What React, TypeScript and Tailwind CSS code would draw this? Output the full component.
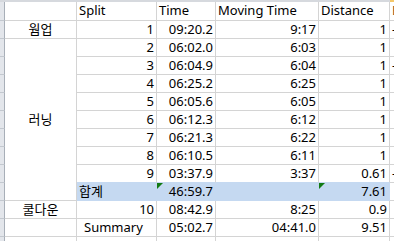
import React from "react";

type Row = { split: string; time: string; moving: string; dist: string; dash?: boolean };

const rows: Row[] = [
  { split: "1", time: "09:20.2", moving: "9:17", dist: "1", dash: true },
  { split: "2", time: "06:02.0", moving: "6:03", dist: "1" },
  { split: "3", time: "06:04.9", moving: "6:04", dist: "1", dash: true },
  { split: "4", time: "06:25.2", moving: "6:25", dist: "1" },
  { split: "5", time: "06:05.6", moving: "6:05", dist: "1" },
  { split: "6", time: "06:12.3", moving: "6:12", dist: "1" },
  { split: "7", time: "06:21.3", moving: "6:22", dist: "1" },
  { split: "8", time: "06:10.5", moving: "6:11", dist: "1" },
  { split: "9", time: "03:37.9", moving: "3:37", dist: "0.61", dash: true },
];

const line = "shrink-0 border-r border-b border-[#d4d4d4] whitespace-nowrap overflow-hidden";
const num = "text-right pr-[2px]";
const hl = "shrink-0 bg-[#c5d9f1] border-r border-b border-[#c5d9f1] whitespace-nowrap overflow-hidden relative";
const tail = "flex-1 min-w-0 border-b border-[#d4d4d4] pl-[2px] whitespace-nowrap overflow-hidden";

// green error marker in the top-left corner of a cell
function Tri() {
  return (
    <svg className="absolute left-0 top-0" width="6" height="6" viewBox="0 0 6 6">
      <polygon points="0,0 6,0 0,6" fill="#137a13" />
    </svg>
  );
}

function DataRow({ r, last }: { r: Row; last?: boolean }) {
  const b = last ? " border-b-[#c5d9f1]" : "";
  return (
    <div className="flex h-[18px]">
      <div className={"w-[80px] " + line + " " + num + b}>{r.split}</div>
      <div className={"w-[59px] " + line + " " + num + b}>{r.time}</div>
      <div className={"w-[103px] " + line + " " + num + b}>{r.moving}</div>
      <div className={"w-[71px] " + line + " " + num + b}>{r.dist}</div>
      <div className={tail}>{r.dash ? "-" : ""}</div>
    </div>
  );
}

export default function App() {
  return (
    <div
      className="w-[394px] h-[241px] overflow-hidden bg-white text-black text-[13px] leading-[17px]"
      style={{ fontFamily: '"Noto Sans", "Noto Sans CJK KR", sans-serif' }}
    >
      {/* column header band (cropped) */}
      <div className="flex h-[2px]">
        <div className="w-[390px] shrink-0 bg-[#d6d9de]" />
        <div className="flex-1 bg-[#f5c86a]" />
      </div>

      <div className="flex">
        {/* row headers (cropped) */}
        <div className="flex flex-col w-[5px] shrink-0">
          <div className="h-[19px] shrink-0 bg-[#e3e6eb] border-r border-b border-r-[#a8afb8] border-b-[#c3c8cf]" />
          {Array.from({ length: 13 }).map((_, i) => (
            <div key={i} className="h-[18px] shrink-0 bg-[#e3e6eb] border-r border-b border-r-[#a8afb8] border-b-[#c3c8cf]" />
          ))}
        </div>

        {/* group column */}
        <div className="flex flex-col w-[72px] shrink-0">
          <div className={"h-[19px] " + line} />
          <div className={"h-[18px] text-center " + line}>웜업</div>
          <div className={"h-[162px] flex items-center justify-center " + line}>러닝</div>
          <div className={"h-[18px] text-center " + line}>쿨다운</div>
          <div className={"h-[18px] " + line} />
          <div className={"h-[18px] " + line} />
        </div>

        <div className="flex-1 min-w-0 flex flex-col">
          {/* header row */}
          <div className="flex h-[19px]">
            <div className={"w-[80px] pl-[2px] " + line}>Split</div>
            <div className={"w-[59px] pl-[2px] " + line}>Time</div>
            <div className={"w-[103px] pl-[2px] " + line}>Moving Time</div>
            <div className={"w-[71px] pl-[2px] " + line}>Distance</div>
            <div className={tail + " text-[#7a4a1c]"}>Elev</div>
          </div>

          {rows.map((r, i) => (
            <DataRow key={r.split} r={r} last={i === rows.length - 1} />
          ))}

          {/* total */}
          <div className="flex h-[18px]">
            <div className={"w-[80px] pl-[2px] " + hl}>합계</div>
            <div className={"w-[59px] " + num + " " + hl}>
              <Tri />
              46:59.7
            </div>
            <div className={"w-[103px] " + hl} />
            <div className={"w-[71px] " + num + " " + hl}>
              <Tri />
              7.61
            </div>
            <div className={tail} />
          </div>

          <DataRow r={{ split: "10", time: "08:42.9", moving: "8:25", dist: "0.9" }} />

          {/* summary */}
          <div className="flex h-[18px]">
            <div className={"w-[80px] pl-[7px] " + line}>Summary</div>
            <div className={"w-[59px] " + num + " " + line}>05:02.7</div>
            <div className={"w-[103px] " + num + " " + line}>04:41.0</div>
            <div className={"w-[71px] " + num + " " + line}>9.51</div>
            <div className={tail} />
          </div>

          <div className="flex h-[18px]">
            <div className={"w-[80px] " + line} />
            <div className={"w-[59px] " + line} />
            <div className={"w-[103px] " + line} />
            <div className={"w-[71px] " + line} />
            <div className={tail} />
          </div>
        </div>
      </div>
    </div>
  );
}
